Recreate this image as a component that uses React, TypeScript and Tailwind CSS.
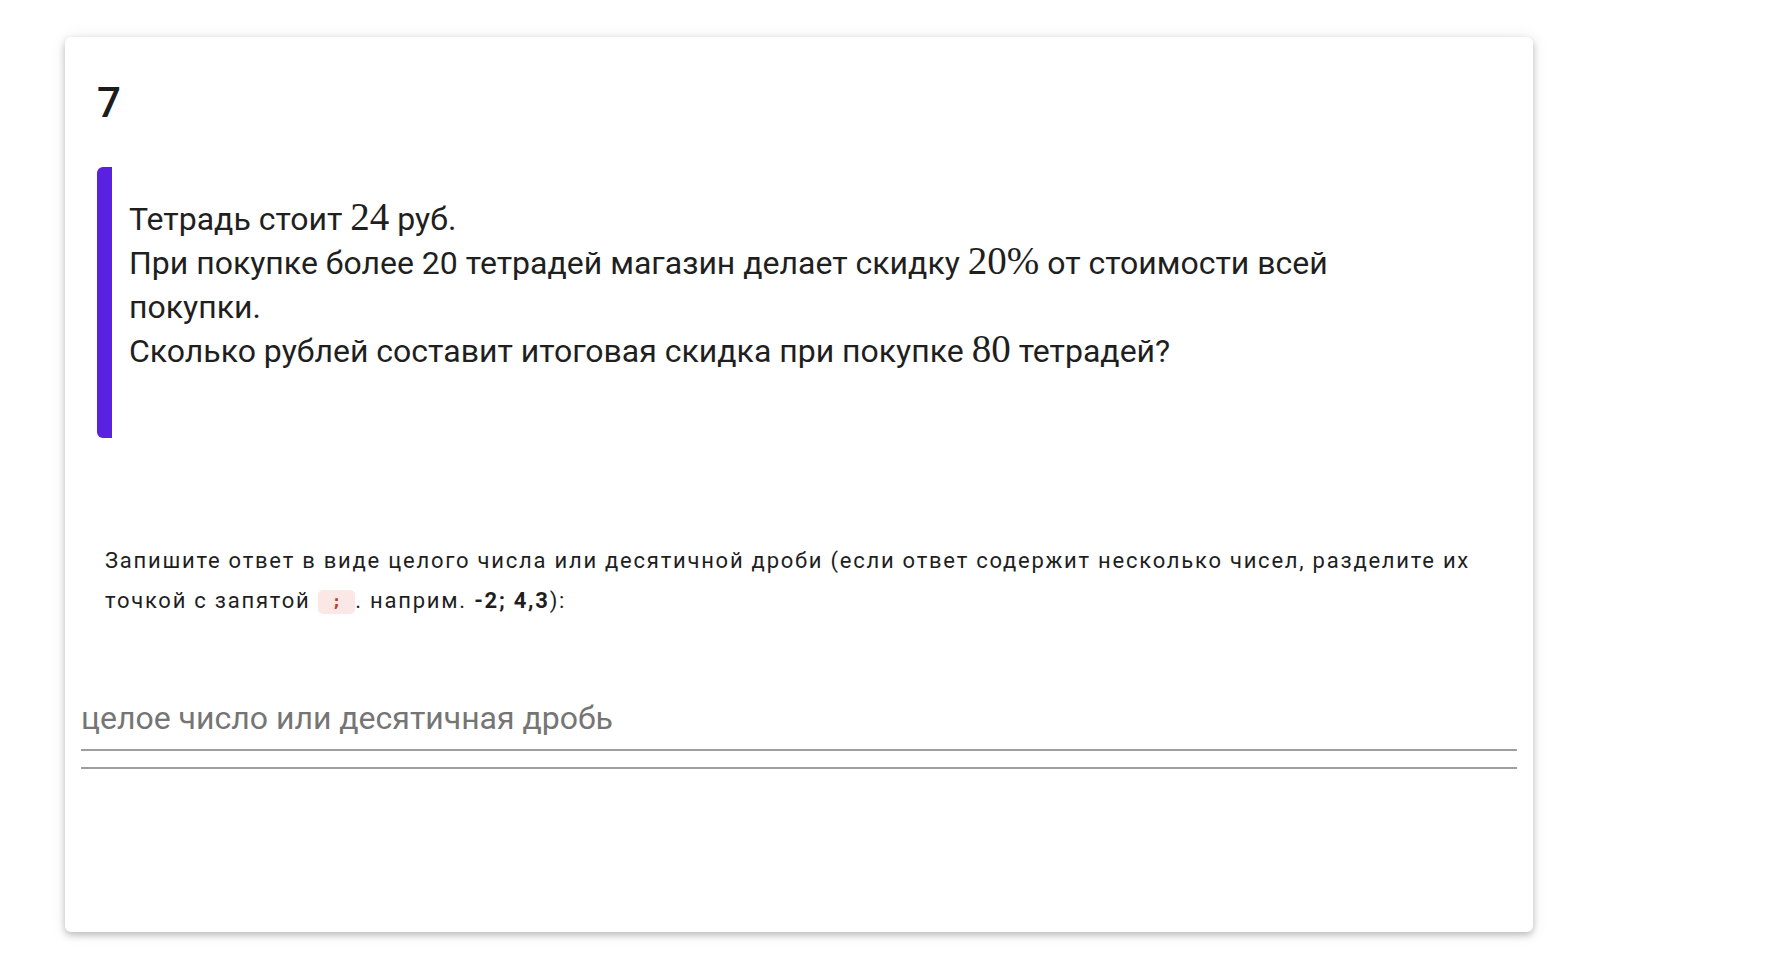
import React from "react";

const M = ({ children }: { children: React.ReactNode }) => (
  <span className="font-['Liberation_Serif',serif] text-[1.22em] leading-none">{children}</span>
);

export default function App() {
  return (
    <div className="min-h-screen bg-white pt-[37px] pl-[65px] font-['Roboto','Noto_Sans',sans-serif] text-[#212121]">
      <div className="w-[1468px] h-[895px] bg-white rounded-[6px] shadow-[0_3px_7px_rgba(0,0,0,0.24),0_1px_18px_rgba(0,0,0,0.08)] px-4 pt-[41px]">
        <h2 className="pl-4 text-[42px] leading-[49px] font-medium text-[#1c1c1c]">7</h2>

        <div className="mt-[40px] ml-4 flex">
          <div className="w-[15px] shrink-0 rounded-l-[6px] bg-[#5b21e0]" />
          <div className="pl-[17px] pt-[30px] pb-[65px] w-[1290px] text-[32px] leading-[44px] text-[#1f1f1f]">
            <div>
              Тетрадь стоит <M>24</M> руб.
            </div>
            <div>
              При покупке более 20 тетрадей магазин делает скидку <M>20%</M> от стоимости всей покупки.
            </div>
            <div>
              Сколько рублей составит итоговая скидка при покупке <M>80</M> тетрадей?
            </div>
          </div>
        </div>

        <p className="mt-[103px] px-6 text-[22px] leading-[40px] tracking-[0.08em] text-[#1e1e1e]">
          Запишите ответ в виде целого числа или десятичной дроби (если ответ содержит несколько чисел, разделите их
          точкой с запятой{" "}
          <span className="inline-block h-[24px] px-[14px] rounded-[5px] bg-[#fbe7e6] align-middle font-['DejaVu_Sans_Mono',monospace] text-[16px] leading-[24px] font-bold tracking-normal text-[#c0392b]">
            ;
          </span>
          . наприм. <b className="font-bold">-2; 4,3</b>):
        </p>

        <div className="mt-[76px]">
          <input
            type="text"
            placeholder="целое число или десятичная дробь"
            className="block w-full h-[54px] pb-[10px] bg-transparent outline-none border-b-2 border-[#9e9e9e] text-[32px] leading-[44px] font-['Roboto',sans-serif] text-[#222] placeholder:text-[#757575]"
          />
          <div className="mt-[16px] h-[2px] bg-[#9e9e9e]" />
        </div>
      </div>
    </div>
  );
}
